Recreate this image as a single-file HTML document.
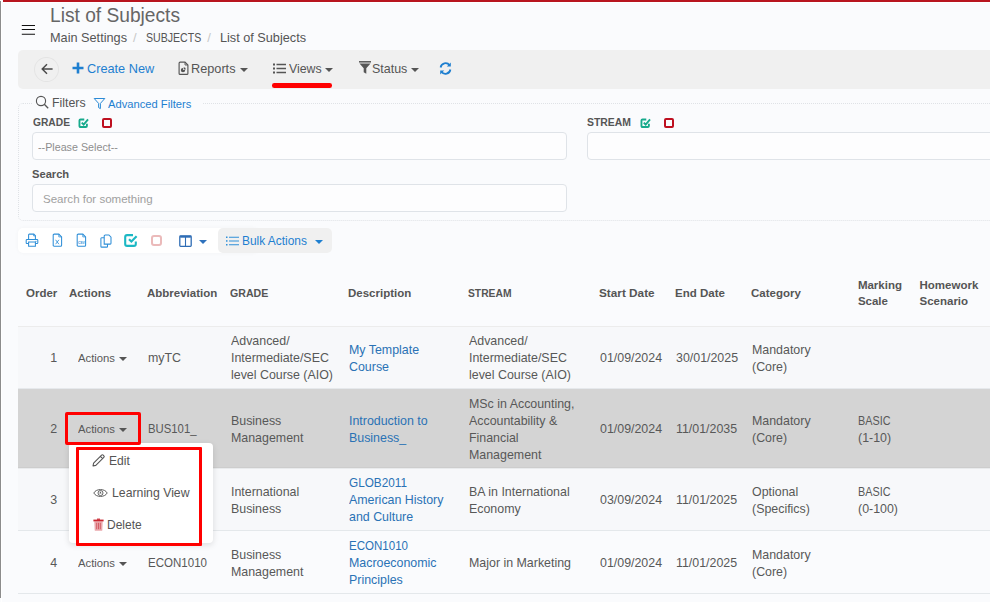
<!DOCTYPE html>
<html><head><meta charset="utf-8"><style>
html,body{margin:0;padding:0;background:#fafbfd;}
body{width:990px;height:602px;overflow:hidden;position:relative;background:#fafbfd;font-family:"Liberation Sans",sans-serif;}
.t{position:absolute;white-space:nowrap;}
.r{position:absolute;}
.caret{position:absolute;width:0;height:0;border-style:solid;border-width:4px 4px 0 4px;border-color:transparent;}
</style></head><body>
<div class="r" style="left:1px;top:0px;width:1px;height:602px;background:#fff;"></div>
<div class="r" style="left:0px;top:1px;width:1px;height:597px;background:#8c8c8c;"></div>
<div class="r" style="left:3px;top:0px;width:987px;height:2px;background:#b8151f;"></div>
<div class="r" style="left:3px;top:2px;width:987px;height:1px;background:#fff;"></div>
<svg class="r" style="left:0;top:0" width="40" height="40"><path d="M21.8 25.5H35M21.8 29.5H35M21.8 34.2H35" stroke="#111" stroke-width="1.15"/></svg>
<div class="t" style="left:50px;top:1.995px;font-size:20px;line-height:26px;color:#666;transform:scaleX(0.9585);transform-origin:left center;">List of Subjects</div>
<div class="t" style="left:50px;top:29.020px;font-size:13px;line-height:17px;color:#555;transform:scaleX(0.9776);transform-origin:left center;">Main Settings</div>
<div class="t" style="left:133px;top:29.020px;font-size:13px;line-height:17px;color:#c8c8c8;">/</div>
<div class="t" style="left:146px;top:29.020px;font-size:13px;line-height:17px;color:#555;transform:scaleX(0.8144);transform-origin:left center;">SUBJECTS</div>
<div class="t" style="left:207.3px;top:29.020px;font-size:13px;line-height:17px;color:#c8c8c8;">/</div>
<div class="t" style="left:220px;top:29.020px;font-size:13px;line-height:17px;color:#555;transform:scaleX(0.9755);transform-origin:left center;">List of Subjects</div>
<div class="r" style="left:18px;top:50px;width:980px;height:39px;background:#f0f0f0;border-radius:5px;"></div>
<div class="r" style="left:34px;top:56.5px;width:25px;height:25.5px;border:1px solid #e4e4e4;border-radius:50%;box-sizing:border-box;"></div>
<svg class="r" style="left:40.5px;top:62.5px" width="12" height="12" viewBox="0 0 12 12"><path d="M11.6 6H1.4M6 1.2L1.2 6L6 10.8" fill="none" stroke="#4a4a4a" stroke-width="1.45"/></svg>
<svg class="r" style="left:72.2px;top:62px" width="12" height="12" viewBox="0 0 12 12"><path d="M6 0.5V11.5M0.5 6H11.5" fill="none" stroke="#1e7fd0" stroke-width="2.6"/></svg>
<div class="t" style="left:87.3px;top:60.020px;font-size:13px;line-height:17px;color:#1e7fd0;transform:scaleX(0.9791);transform-origin:left center;">Create New</div>
<svg class="r" style="left:178px;top:61px" width="11" height="14" viewBox="0 0 11 14"><path d="M1.1 2.2Q1.1 1.1 2.2 1.1H7L9.9 4V12.4Q9.9 13.4 8.9 13.4H2.1Q1.1 13.4 1.1 12.4Z" fill="none" stroke="#555" stroke-width="1.15"/><path d="M7 1.2V4H9.8" fill="none" stroke="#555" stroke-width="0.9"/><path d="M5 6.9V9.1H7.2A2.2 2.2 0 1 1 5 6.9Z" fill="#555"/><path d="M5.7 6.3V8.4H7.8A2.1 2.1 0 0 0 5.7 6.3Z" fill="#555"/></svg>
<div class="t" style="left:191.3px;top:60.020px;font-size:13px;line-height:17px;color:#555;transform:scaleX(0.9776);transform-origin:left center;">Reports</div>
<div class="caret" style="left:240px;top:68px;border-top-color:#555"></div>
<svg class="r" style="left:273px;top:62.6px" width="13" height="11" viewBox="0 0 13 11"><rect x="0" y="0.5" width="2" height="2" fill="#555"/><rect x="0" y="4.5" width="2" height="2" fill="#555"/><rect x="0" y="8.5" width="2" height="2" fill="#555"/><path d="M3.5 1.5H13M3.5 5.5H13M3.5 9.5H13" stroke="#555" stroke-width="1.4"/></svg>
<div class="t" style="left:289px;top:60.020px;font-size:13px;line-height:17px;color:#555;transform:scaleX(0.9494);transform-origin:left center;">Views</div>
<div class="caret" style="left:325px;top:68px;border-top-color:#555"></div>
<div class="r" style="left:272px;top:83px;width:60px;height:4.6px;background:#f00;border-radius:2.3px;"></div>
<svg class="r" style="left:359px;top:61px" width="12" height="13" viewBox="0 0 12 13"><path d="M0 0.8H12" stroke="#555" stroke-width="1.5"/><path d="M0.5 2.5H11.5L7.3 7.2V12.8L4.7 11.2V7.2Z" fill="#555"/></svg>
<div class="t" style="left:371.7px;top:60.020px;font-size:13px;line-height:17px;color:#555;transform:scaleX(0.9578);transform-origin:left center;">Status</div>
<div class="caret" style="left:411px;top:68px;border-top-color:#555"></div>
<svg class="r" style="left:439px;top:62px" width="13" height="13" viewBox="0 0 13 13"><path d="M1.6 5.5A5 5 0 0 1 10.6 3.3M11.4 7.5A5 5 0 0 1 2.4 9.7" fill="none" stroke="#1e7fd0" stroke-width="1.8"/><path d="M11.8 0.6V4.6H7.8Z M1.2 12.4V8.4H5.2Z" fill="#1e7fd0"/></svg>
<div class="r" style="left:18px;top:103px;width:990px;height:118px;border:1px dotted #dfe2e6;border-radius:5px;box-sizing:border-box;"></div>
<div class="r" style="left:32px;top:98px;width:170px;height:10px;background:#fafbfd;"></div>
<svg class="r" style="left:35px;top:95px" width="15" height="15" viewBox="0 0 15 15"><circle cx="6" cy="6" r="4.6" fill="none" stroke="#555" stroke-width="1.15"/><path d="M9.3 9.3L13.2 13.2" stroke="#555" stroke-width="1.3"/></svg>
<div class="t" style="left:51.7px;top:94.978px;font-size:12.4px;line-height:16px;color:#555;transform:scaleX(0.9954);transform-origin:left center;">Filters</div>
<svg class="r" style="left:93px;top:97px" width="13" height="13" viewBox="0 0 13 13"><path d="M1.2 1.5H11.8L7.4 6.4V11.6L5.6 10.6V6.4Z" fill="none" stroke="#2b8ad6" stroke-width="1" stroke-linejoin="round"/></svg>
<div class="t" style="left:108px;top:96.994px;font-size:11.2px;line-height:15px;color:#1e7fd0;transform:scaleX(0.9998);transform-origin:left center;">Advanced Filters</div>
<div class="t" style="left:32.5px;top:114.994px;font-size:11.2px;line-height:15px;color:#555;font-weight:700;transform:scaleX(0.9148);transform-origin:left center;">GRADE</div>
<svg class="r" style="left:77.5px;top:117.3px" width="11.5" height="11.5" viewBox="0 0 11 11"><path d="M8.5 6.5V8.6Q8.5 9.6 7.5 9.6H2.4Q1.4 9.6 1.4 8.6V3.4Q1.4 2.4 2.4 2.4H6" fill="none" stroke="#17aa8c" stroke-width="1.8"/><path d="M3.6 5.4L5.4 7.2L9.6 2.2" fill="none" stroke="#17aa8c" stroke-width="1.8"/></svg>
<div class="r" style="left:102px;top:118px;width:10px;height:10px;border:2px solid #be1020;border-radius:2px;box-sizing:border-box;"></div>
<div class="t" style="left:587px;top:114.994px;font-size:11.2px;line-height:15px;color:#555;font-weight:700;transform:scaleX(0.9305);transform-origin:left center;">STREAM</div>
<svg class="r" style="left:639.5px;top:117.3px" width="11.5" height="11.5" viewBox="0 0 11 11"><path d="M8.5 6.5V8.6Q8.5 9.6 7.5 9.6H2.4Q1.4 9.6 1.4 8.6V3.4Q1.4 2.4 2.4 2.4H6" fill="none" stroke="#17aa8c" stroke-width="1.8"/><path d="M3.6 5.4L5.4 7.2L9.6 2.2" fill="none" stroke="#17aa8c" stroke-width="1.8"/></svg>
<div class="r" style="left:664px;top:118px;width:10px;height:10px;border:2px solid #be1020;border-radius:2px;box-sizing:border-box;"></div>
<div class="r" style="left:32px;top:132px;width:535px;height:28px;background:#fdfdfe;border:1px solid #dfe3e8;border-radius:4px;box-sizing:border-box;"></div>
<div class="r" style="left:587px;top:132px;width:420px;height:28px;background:#fdfdfe;border:1px solid #dfe3e8;border-radius:4px;box-sizing:border-box;"></div>
<div class="t" style="left:37.8px;top:139.994px;font-size:11.2px;line-height:15px;color:#8e8e8e;transform:scaleX(0.9592);transform-origin:left center;">--Please Select--</div>
<div class="t" style="left:31.7px;top:166.994px;font-size:11.2px;line-height:15px;color:#555;font-weight:700;transform:scaleX(0.9958);transform-origin:left center;">Search</div>
<div class="r" style="left:32px;top:184px;width:535px;height:28px;background:#fdfdfe;border:1px solid #dfe3e8;border-radius:4px;box-sizing:border-box;"></div>
<div class="t" style="left:42.6px;top:191.006px;font-size:11.6px;line-height:15px;color:#a0a0a0;transform:scaleX(0.9949);transform-origin:left center;">Search for something</div>
<div class="r" style="left:18px;top:228px;width:240px;height:25px;background:#fff;border-radius:5px;box-shadow:0 0 4px rgba(0,0,0,0.035);"></div>
<div class="r" style="left:218px;top:228px;width:114px;height:25px;background:#f0f0f0;border-radius:5px;"></div>
<svg class="r" style="left:25px;top:233px" width="14" height="14" viewBox="0 0 14 14"><path d="M3.6 6.5V1.8Q3.6 1.1 4.3 1.1H8.8L10.4 2.7V6.5" fill="none" stroke="#2f8fd8" stroke-width="1.05"/><path d="M3.6 10.5H2Q1.2 10.5 1.2 9.7V7.3Q1.2 6.5 2 6.5H12Q12.8 6.5 12.8 7.3V9.7Q12.8 10.5 12 10.5H10.4" fill="none" stroke="#2f8fd8" stroke-width="1.05"/><path d="M3.6 9V13.2H10.4V9Z" fill="none" stroke="#2f8fd8" stroke-width="1.05"/><circle cx="10.9" cy="8.3" r="0.6" fill="#2f8fd8"/><path d="M8.6 1.2V2.9H10.3" fill="none" stroke="#2f8fd8" stroke-width="0.8"/></svg>
<svg class="r" style="left:52px;top:233px" width="11" height="14" viewBox="0 0 11 14"><path d="M1.2 2.1Q1.2 1.1 2.2 1.1H6.8L9.6 3.9V12.2Q9.6 13.2 8.6 13.2H2.2Q1.2 13.2 1.2 12.2Z" fill="none" stroke="#2f8fd8" stroke-width="1.05"/><path d="M6.8 1.2V3.9H9.5" fill="none" stroke="#2f8fd8" stroke-width="0.8"/><path d="M3.6 6.8L6.9 11.2M6.9 6.8L3.6 11.2" stroke="#2f8fd8" stroke-width="0.85"/></svg>
<svg class="r" style="left:75.5px;top:233px" width="11" height="14" viewBox="0 0 11 14"><path d="M1.2 2.1Q1.2 1.1 2.2 1.1H6.8L9.6 3.9V12.2Q9.6 13.2 8.6 13.2H2.2Q1.2 13.2 1.2 12.2Z" fill="none" stroke="#2f8fd8" stroke-width="1.05"/><path d="M6.8 1.2V3.9H9.5" fill="none" stroke="#2f8fd8" stroke-width="0.8"/><text x="5.4" y="10.6" font-size="3.4" text-anchor="middle" fill="#2f8fd8" font-family="Liberation Sans" font-weight="700">CSV</text></svg>
<svg class="r" style="left:99.5px;top:233.5px" width="12" height="14" viewBox="0 0 12 14"><path d="M4.2 2Q4.2 1 5.2 1H8.9L11 3.1V9.3Q11 10.1 10.2 10.1H4.2Z" fill="none" stroke="#2f8fd8" stroke-width="1.05"/><path d="M4.2 3.8H1.6Q.9 3.8 .9 4.6V12.4Q.9 13.1 1.6 13.1H6.8Q7.5 13.1 7.5 12.4V10.1" fill="none" stroke="#2f8fd8" stroke-width="1.05"/></svg>
<svg class="r" style="left:124px;top:234px" width="14" height="13" viewBox="0 0 14 13"><path d="M11.8 7.6V10Q11.8 11.9 9.9 11.9H3.1Q1.2 11.9 1.2 10V3Q1.2 1.1 3.1 1.1H9" fill="none" stroke="#1cb8c4" stroke-width="2.1"/><path d="M5 5.2L7.4 7.6L12.6 2.3" fill="none" stroke="#1cb8c4" stroke-width="2.1"/></svg>
<div class="r" style="left:151px;top:235px;width:11px;height:11px;border:2px solid #ebbaba;border-radius:3px;box-sizing:border-box;"></div>
<svg class="r" style="left:178.5px;top:234.5px" width="13" height="12" viewBox="0 0 13 12"><path d="M1.2 1.7H11.8" stroke="#2f6db5" stroke-width="2"/><rect x="0.8" y="1" width="11.4" height="10.3" rx="0.8" fill="none" stroke="#2f6db5" stroke-width="1.3"/><path d="M6.5 1V11.3" stroke="#2f6db5" stroke-width="1.1"/></svg>
<div class="caret" style="left:199px;top:240px;border-top-color:#2f72bd;border-width:4px 4px 0 4px"></div>
<svg class="r" style="left:226px;top:235.5px" width="13" height="10" viewBox="0 0 13 10"><rect x="0" y="0.5" width="1.5" height="1.5" fill="#2f8fd8"/><rect x="0" y="4.2" width="1.5" height="1.5" fill="#2f8fd8"/><rect x="0" y="8" width="1.5" height="1.5" fill="#2f8fd8"/><path d="M3 1.2H13M3 5H13M3 8.8H13" stroke="#2f8fd8" stroke-width="1.1"/></svg>
<div class="t" style="left:241.5px;top:234.002px;font-size:11.9px;line-height:15px;color:#1e7fd0;transform:scaleX(1.0027);transform-origin:left center;">Bulk Actions</div>
<div class="caret" style="left:315px;top:239.5px;border-top-color:#1e7fd0;border-width:4px 4px 0 4px"></div>
<div class="t" style="right:932.7px;top:285.990px;font-size:11.5px;line-height:15px;color:#555;font-weight:700;">Order</div>
<div class="t" style="left:69px;top:285.990px;font-size:11.5px;line-height:15px;color:#555;font-weight:700;">Actions</div>
<div class="t" style="left:147px;top:285.990px;font-size:11.5px;line-height:15px;color:#555;font-weight:700;">Abbreviation</div>
<div class="t" style="left:230px;top:285.990px;font-size:11.5px;line-height:15px;color:#555;font-weight:700;transform:scaleX(0.9222);transform-origin:left center;">GRADE</div>
<div class="t" style="left:348px;top:285.990px;font-size:11.5px;line-height:15px;color:#555;font-weight:700;">Description</div>
<div class="t" style="left:468px;top:285.990px;font-size:11.5px;line-height:15px;color:#555;font-weight:700;transform:scaleX(0.8959);transform-origin:left center;">STREAM</div>
<div class="t" style="left:599px;top:285.990px;font-size:11.5px;line-height:15px;color:#555;font-weight:700;transform:scaleX(1.0235);transform-origin:left center;">Start Date</div>
<div class="t" style="left:675px;top:285.990px;font-size:11.5px;line-height:15px;color:#555;font-weight:700;transform:scaleX(1.0032);transform-origin:left center;">End Date</div>
<div class="t" style="left:751px;top:285.990px;font-size:11.5px;line-height:15px;color:#555;font-weight:700;">Category</div>
<div class="t" style="left:857.9px;top:277.990px;font-size:11.5px;line-height:15px;color:#555;font-weight:700;">Marking</div>
<div class="t" style="left:857.9px;top:293.990px;font-size:11.5px;line-height:15px;color:#555;font-weight:700;">Scale</div>
<div class="t" style="left:919.5px;top:277.990px;font-size:11.5px;line-height:15px;color:#555;font-weight:700;">Homework</div>
<div class="t" style="left:919.5px;top:293.990px;font-size:11.5px;line-height:15px;color:#555;font-weight:700;">Scenario</div>
<div class="r" style="left:18px;top:327px;width:972px;height:61px;background:#f7f8fa;"></div>
<div class="r" style="left:18px;top:469px;width:972px;height:61px;background:#f7f8fa;"></div>
<div class="r" style="left:18px;top:326px;width:972px;height:1px;background:#ececec;"></div>
<div class="r" style="left:18px;top:388px;width:972px;height:1px;background:#e6e9ec;"></div>
<div class="r" style="left:18px;top:389px;width:972px;height:78px;background:#d4d4d4;"></div>
<div class="r" style="left:18px;top:467px;width:972px;height:1px;background:#cdcdcd;"></div>
<div class="r" style="left:18px;top:468px;width:972px;height:1px;background:#e9ebed;"></div>
<div class="r" style="left:18px;top:530px;width:972px;height:1px;background:#e4e8eb;"></div>
<div class="r" style="left:18px;top:593px;width:972px;height:1px;background:#e4e8eb;"></div>
<div class="t" style="right:933px;top:349.020px;font-size:13px;line-height:17px;color:#585858;transform:scaleX(0.9538);transform-origin:right center;">1</div>
<div class="t" style="left:78px;top:350.990px;font-size:11.5px;line-height:15px;color:#585858;transform:scaleX(0.9811);transform-origin:left center;">Actions</div>
<div class="caret" style="left:118.5px;top:357px;border-top-color:#555"></div>
<div class="t" style="left:148px;top:349.020px;font-size:13px;line-height:17px;color:#585858;transform:scaleX(0.9538);transform-origin:left center;">myTC</div>
<div class="t" style="left:231px;top:332.020px;font-size:13px;line-height:17px;color:#585858;transform:scaleX(0.9538);transform-origin:left center;">Advanced/</div>
<div class="t" style="left:231px;top:349.020px;font-size:13px;line-height:17px;color:#585858;transform:scaleX(0.9538);transform-origin:left center;">Intermediate/SEC</div>
<div class="t" style="left:231px;top:366.020px;font-size:13px;line-height:17px;color:#585858;transform:scaleX(0.9538);transform-origin:left center;">level Course (AIO)</div>
<div class="t" style="left:349px;top:341.020px;font-size:13px;line-height:17px;color:#2a72b5;transform:scaleX(0.9538);transform-origin:left center;">My Template</div>
<div class="t" style="left:349px;top:358.020px;font-size:13px;line-height:17px;color:#2a72b5;transform:scaleX(0.9538);transform-origin:left center;">Course</div>
<div class="t" style="left:468.7px;top:332.020px;font-size:13px;line-height:17px;color:#585858;transform:scaleX(0.9538);transform-origin:left center;">Advanced/</div>
<div class="t" style="left:468.7px;top:349.020px;font-size:13px;line-height:17px;color:#585858;transform:scaleX(0.9538);transform-origin:left center;">Intermediate/SEC</div>
<div class="t" style="left:468.7px;top:366.020px;font-size:13px;line-height:17px;color:#585858;transform:scaleX(0.9538);transform-origin:left center;">level Course (AIO)</div>
<div class="t" style="left:599.7px;top:349.020px;font-size:13px;line-height:17px;color:#585858;transform:scaleX(0.9538);transform-origin:left center;">01/09/2024</div>
<div class="t" style="left:675.7px;top:349.020px;font-size:13px;line-height:17px;color:#585858;transform:scaleX(0.9538);transform-origin:left center;">30/01/2025</div>
<div class="t" style="left:751.6px;top:341.020px;font-size:13px;line-height:17px;color:#585858;transform:scaleX(0.9538);transform-origin:left center;">Mandatory</div>
<div class="t" style="left:751.6px;top:358.020px;font-size:13px;line-height:17px;color:#585858;transform:scaleX(0.9538);transform-origin:left center;">(Core)</div>
<div class="t" style="right:933px;top:420.020px;font-size:13px;line-height:17px;color:#585858;transform:scaleX(0.9538);transform-origin:right center;">2</div>
<div class="t" style="left:78px;top:421.990px;font-size:11.5px;line-height:15px;color:#585858;transform:scaleX(0.9811);transform-origin:left center;">Actions</div>
<div class="caret" style="left:118.5px;top:428px;border-top-color:#555"></div>
<div class="t" style="left:148px;top:420.020px;font-size:13px;line-height:17px;color:#585858;transform:scaleX(0.8715);transform-origin:left center;">BUS101_</div>
<div class="t" style="left:231px;top:412.020px;font-size:13px;line-height:17px;color:#585858;transform:scaleX(0.9538);transform-origin:left center;">Business</div>
<div class="t" style="left:231px;top:429.020px;font-size:13px;line-height:17px;color:#585858;transform:scaleX(0.9538);transform-origin:left center;">Management</div>
<div class="t" style="left:349px;top:412.020px;font-size:13px;line-height:17px;color:#2a72b5;transform:scaleX(0.9538);transform-origin:left center;">Introduction to</div>
<div class="t" style="left:349px;top:429.020px;font-size:13px;line-height:17px;color:#2a72b5;transform:scaleX(0.9538);transform-origin:left center;">Business_</div>
<div class="t" style="left:468.7px;top:395.020px;font-size:13px;line-height:17px;color:#585858;transform:scaleX(0.9538);transform-origin:left center;">MSc in Accounting,</div>
<div class="t" style="left:468.7px;top:412.020px;font-size:13px;line-height:17px;color:#585858;transform:scaleX(0.9538);transform-origin:left center;">Accountability &amp;</div>
<div class="t" style="left:468.7px;top:429.020px;font-size:13px;line-height:17px;color:#585858;transform:scaleX(0.9538);transform-origin:left center;">Financial</div>
<div class="t" style="left:468.7px;top:446.020px;font-size:13px;line-height:17px;color:#585858;transform:scaleX(0.9538);transform-origin:left center;">Management</div>
<div class="t" style="left:599.7px;top:420.020px;font-size:13px;line-height:17px;color:#585858;transform:scaleX(0.9538);transform-origin:left center;">01/09/2024</div>
<div class="t" style="left:675.7px;top:420.020px;font-size:13px;line-height:17px;color:#585858;transform:scaleX(0.9538);transform-origin:left center;">11/01/2035</div>
<div class="t" style="left:751.6px;top:412.020px;font-size:13px;line-height:17px;color:#585858;transform:scaleX(0.9538);transform-origin:left center;">Mandatory</div>
<div class="t" style="left:751.6px;top:429.020px;font-size:13px;line-height:17px;color:#585858;transform:scaleX(0.9538);transform-origin:left center;">(Core)</div>
<div class="t" style="left:857.9px;top:412.020px;font-size:13px;line-height:17px;color:#585858;transform:scaleX(0.8331);transform-origin:left center;">BASIC</div>
<div class="t" style="left:857.9px;top:429.020px;font-size:13px;line-height:17px;color:#585858;transform:scaleX(0.9538);transform-origin:left center;">(1-10)</div>
<div class="t" style="right:933px;top:491.020px;font-size:13px;line-height:17px;color:#585858;transform:scaleX(0.9538);transform-origin:right center;">3</div>
<div class="t" style="left:231px;top:483.020px;font-size:13px;line-height:17px;color:#585858;transform:scaleX(0.9538);transform-origin:left center;">International</div>
<div class="t" style="left:231px;top:500.020px;font-size:13px;line-height:17px;color:#585858;transform:scaleX(0.9538);transform-origin:left center;">Business</div>
<div class="t" style="left:349px;top:474.020px;font-size:13px;line-height:17px;color:#2a72b5;transform:scaleX(0.9051);transform-origin:left center;">GLOB2011</div>
<div class="t" style="left:349px;top:491.020px;font-size:13px;line-height:17px;color:#2a72b5;transform:scaleX(0.9538);transform-origin:left center;">American History</div>
<div class="t" style="left:349px;top:508.020px;font-size:13px;line-height:17px;color:#2a72b5;transform:scaleX(0.9538);transform-origin:left center;">and Culture</div>
<div class="t" style="left:468.7px;top:483.020px;font-size:13px;line-height:17px;color:#585858;transform:scaleX(0.9538);transform-origin:left center;">BA in International</div>
<div class="t" style="left:468.7px;top:500.020px;font-size:13px;line-height:17px;color:#585858;transform:scaleX(0.9538);transform-origin:left center;">Economy</div>
<div class="t" style="left:599.7px;top:491.020px;font-size:13px;line-height:17px;color:#585858;transform:scaleX(0.9538);transform-origin:left center;">03/09/2024</div>
<div class="t" style="left:675.7px;top:491.020px;font-size:13px;line-height:17px;color:#585858;transform:scaleX(0.9538);transform-origin:left center;">11/01/2025</div>
<div class="t" style="left:751.6px;top:483.020px;font-size:13px;line-height:17px;color:#585858;transform:scaleX(0.9538);transform-origin:left center;">Optional</div>
<div class="t" style="left:751.6px;top:500.020px;font-size:13px;line-height:17px;color:#585858;transform:scaleX(0.9538);transform-origin:left center;">(Specifics)</div>
<div class="t" style="left:857.9px;top:483.020px;font-size:13px;line-height:17px;color:#585858;transform:scaleX(0.8331);transform-origin:left center;">BASIC</div>
<div class="t" style="left:857.9px;top:500.020px;font-size:13px;line-height:17px;color:#585858;transform:scaleX(0.9538);transform-origin:left center;">(0-100)</div>
<div class="t" style="right:933px;top:554.020px;font-size:13px;line-height:17px;color:#585858;transform:scaleX(0.9538);transform-origin:right center;">4</div>
<div class="t" style="left:78px;top:555.990px;font-size:11.5px;line-height:15px;color:#585858;transform:scaleX(0.9811);transform-origin:left center;">Actions</div>
<div class="caret" style="left:118.5px;top:562px;border-top-color:#555"></div>
<div class="t" style="left:148px;top:554.020px;font-size:13px;line-height:17px;color:#585858;transform:scaleX(0.8875);transform-origin:left center;">ECON1010</div>
<div class="t" style="left:231px;top:546.020px;font-size:13px;line-height:17px;color:#585858;transform:scaleX(0.9538);transform-origin:left center;">Business</div>
<div class="t" style="left:231px;top:563.020px;font-size:13px;line-height:17px;color:#585858;transform:scaleX(0.9538);transform-origin:left center;">Management</div>
<div class="t" style="left:349px;top:537.020px;font-size:13px;line-height:17px;color:#2a72b5;transform:scaleX(0.8875);transform-origin:left center;">ECON1010</div>
<div class="t" style="left:349px;top:554.020px;font-size:13px;line-height:17px;color:#2a72b5;transform:scaleX(0.9538);transform-origin:left center;">Macroeconomic</div>
<div class="t" style="left:349px;top:571.020px;font-size:13px;line-height:17px;color:#2a72b5;transform:scaleX(0.9538);transform-origin:left center;">Principles</div>
<div class="t" style="left:468.7px;top:554.020px;font-size:13px;line-height:17px;color:#585858;transform:scaleX(0.9538);transform-origin:left center;">Major in Marketing</div>
<div class="t" style="left:599.7px;top:554.020px;font-size:13px;line-height:17px;color:#585858;transform:scaleX(0.9538);transform-origin:left center;">01/09/2024</div>
<div class="t" style="left:675.7px;top:554.020px;font-size:13px;line-height:17px;color:#585858;transform:scaleX(0.9538);transform-origin:left center;">11/01/2025</div>
<div class="t" style="left:751.6px;top:546.020px;font-size:13px;line-height:17px;color:#585858;transform:scaleX(0.9538);transform-origin:left center;">Mandatory</div>
<div class="t" style="left:751.6px;top:563.020px;font-size:13px;line-height:17px;color:#585858;transform:scaleX(0.9538);transform-origin:left center;">(Core)</div>
<div class="r" style="left:69px;top:443px;width:144px;height:100px;background:#fff;border-radius:4px;box-shadow:0 2px 6px rgba(0,0,0,0.12);"></div>
<div class="r" style="left:76px;top:447px;width:126px;height:99px;border:3px solid #f00;border-radius:1px;box-sizing:border-box;"></div>
<div class="r" style="left:65px;top:412px;width:76px;height:32.8px;border:3px solid #f00;border-radius:2px;box-sizing:border-box;"></div>
<svg class="r" style="left:92px;top:454px" width="13" height="13" viewBox="0 0 13 13"><path d="M1 12L1.6 9.2L9.6 1.2Q10.4 .4 11.2 1.2L11.8 1.8Q12.6 2.6 11.8 3.4L3.8 11.4Z M8.4 2.4L10.6 4.6" fill="none" stroke="#555" stroke-width="1.1" stroke-linejoin="round"/></svg>
<div class="t" style="left:108.5px;top:452.978px;font-size:12.4px;line-height:16px;color:#555;transform:scaleX(0.9735);transform-origin:left center;">Edit</div>
<svg class="r" style="left:93px;top:487.5px" width="15" height="10" viewBox="0 0 15 10"><path d="M0.8 5C3.2 0.4 11.8 0.4 14.2 5C11.8 9.6 3.2 9.6 0.8 5Z" fill="none" stroke="#5e5e5e" stroke-width="1"/><circle cx="7.5" cy="5" r="2.5" fill="none" stroke="#5e5e5e" stroke-width="0.95"/><path d="M7.4 3.3L8.6 5.6H6.3Z" fill="#5e5e5e"/></svg>
<div class="t" style="left:111.6px;top:484.978px;font-size:12.4px;line-height:16px;color:#555;transform:scaleX(0.9903);transform-origin:left center;">Learning View</div>
<svg class="r" style="left:92.5px;top:518px" width="11" height="13" viewBox="0 0 11 13"><path d="M1.3 3.4H9.7L9.3 12.2Q9.2 12.8 8.6 12.8H2.4Q1.8 12.8 1.7 12.2Z" fill="#eaa9ad"/><rect x="0.4" y="1.6" width="10.2" height="1.8" fill="#c9252f"/><rect x="4" y="0.6" width="3" height="1.2" fill="#c9252f"/><path d="M3.7 4.8V11.2M5.5 4.8V11.2M7.3 4.8V11.2" stroke="#d0505a" stroke-width="0.85"/></svg>
<div class="t" style="left:107.4px;top:516.978px;font-size:12.4px;line-height:16px;color:#555;transform:scaleX(0.9681);transform-origin:left center;">Delete</div>
</body></html>
